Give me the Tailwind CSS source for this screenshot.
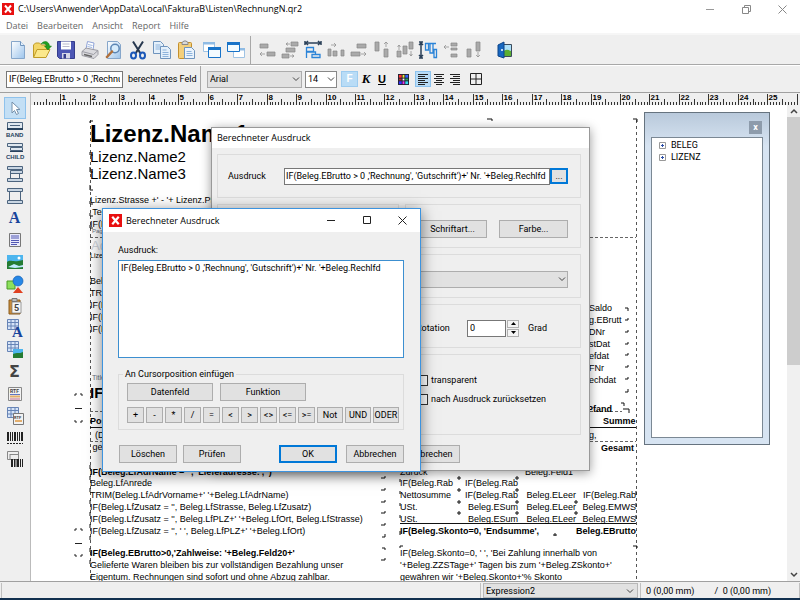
<!DOCTYPE html>
<html lang="de">

<head>
  <meta charset="UTF-8" />
  <meta name="viewport" content="width=device-width, initial-scale=1.0" />
  <title>RechnungN.qr2</title>
  <script src="https://cdn.jsdelivr.net/npm/@tailwindcss/browser@4"></script>
</head>

<body class="h-screen flex flex-col overflow-hidden bg-white text-black text-[9px] leading-3 font-['Roboto','Liberation_Sans',sans-serif]">

  <!-- Titelleiste -->
  <header class="shrink-0 flex items-center h-[18px] pl-0.5 pr-3 font-['Open_Sans',sans-serif]">
    <svg class="w-3 h-3 mr-1" viewBox="0 0 12 12"><rect width="12" height="12" fill="#e81010" /><path d="M3 2.5l6 7M9 2.5l-6 7" stroke="#fff" stroke-width="2" /></svg>
    <h1 class="flex-1">C:\Users\Anwender\AppData\Local\FakturaB\Listen\RechnungN.qr2</h1>
    <div class="flex items-center gap-[25px]">
      <button aria-label="Minimieren"><svg class="w-[11px] h-[11px]" viewBox="0 0 11 11"><path d="M1 5.5h8" stroke="#999" /></svg></button>
      <button aria-label="Wiederherstellen"><svg class="w-[11px] h-[11px]" viewBox="0 0 11 11" fill="none" stroke="#888"><path d="M1.5 3.5h6v6h-6zM3.500 3.500v-2h6v6h-2" /></svg></button>
      <button aria-label="Schließen"><svg class="w-[11px] h-[11px]" viewBox="0 0 11 11"><path d="M1.500 1.500l8 8M9.500 1.500l-8 8" stroke="#888" /></svg></button>
    </div>
  </header>

  <!-- Menü -->
  <nav class="shrink-0 flex items-start gap-[9px] h-[15px] pl-1.5 font-['Open_Sans',sans-serif] leading-4 text-[#666]">
    <a href="#">Datei</a>
    <a href="#">Bearbeiten</a>
    <a href="#">Ansicht</a>
    <a href="#">Report</a>
    <a href="#">Hilfe</a>
  </nav>

  <!-- Symbolleiste -->
  <div class="shrink-0 flex items-center h-8 pl-1.5 bg-[#efefef] border-t-2 border-t-[#f6f6f6] border-b border-b-[#a8a8a8] [&_svg]:w-5 [&_svg]:h-5 [&_button]:h-6 [&_button]:flex [&_button]:items-center [&_button]:justify-center">
    <div class="flex [&_button]:w-6">
      <button aria-label="Neu"><svg viewBox="0 0 20 20"><defs><linearGradient id="pg" x2="1" y2="1"><stop offset="0" stop-color="#fff" /><stop offset="1" stop-color="#9cc4ec" /></linearGradient></defs><path d="M3.500 1.500h9l4 4v13h-13z" fill="url(#pg)" stroke="#86a6ca" /><path d="M12.500 1.500v4h4" fill="#e4f0fb" stroke="#6f94bd" /></svg></button>
      <button aria-label="Öffnen"><svg viewBox="0 0 20 20"><path d="M1.500 17V5l2-2h4l2 2h5v4" fill="#f3d668" stroke="#c09c28" /><path d="M1.500 17.500l3.500-8h13l-4 8z" fill="#fbe88c" stroke="#c09c28" /><path d="M9 4c3-4 8-3 8.500 2h2l-3.500 4-3.500-4h2c0-2-3-3-5.500-2z" fill="#22a022" stroke="#137013" stroke-width=".5" /></svg></button>
      <button aria-label="Speichern"><svg viewBox="0 0 20 20"><path d="M1.500 1.500h17v17H3.500l-2-2z" fill="#4c56b4" stroke="#343c8c" /><path d="M5 1.500h10v8H5z" fill="#fff" /><path d="M6.500 4h7M6.500 6.500h7" stroke="#b9b9cc" /><path d="M6 13h8v5.500H6z" fill="#d5d7e8" /><path d="M7.500 14h2.500v4.500H7.500z" fill="#343c8c" /></svg></button>
      <button aria-label="Drucken"><svg viewBox="0 0 20 20"><path d="M6 9l1.500-7.500 6.500 1.500-1 7z" fill="#fff" stroke="#8fa3d8" /><path d="M2 11.500l4-3.500 12 2.500v4l-4 4-12-3z" fill="#dadade" stroke="#9a9aa2" /><path d="M2 11.500l11.500 3 4.500-4" fill="none" stroke="#9a9aa2" /><path d="M4 14.500l8 2" stroke="#666" stroke-width="1.500" /><path d="M8 4.500l4.500 1M7.500 6.500l4.500 1" stroke="#9fb7e0" /></svg></button>
      <button aria-label="Vorschau"><svg viewBox="0 0 20 20"><path d="M3.500 1.500h10l3 3v14h-13z" fill="url(#pg)" stroke="#86a6ca" /><circle cx="11" cy="8.500" r="4.200" fill="#d7ecfc" stroke="#5c86b4" stroke-width="1.500" /><path d="M8 11.500l-5 5.500" stroke="#b0703c" stroke-width="2.500" stroke-linecap="round" /></svg></button>
      <button aria-label="Ausschneiden"><svg viewBox="0 0 20 20" fill="none"><path d="M5 1.500l7.500 12M15 1.500L7.500 13.500" stroke="#27384f" stroke-width="2" /><ellipse cx="5.500" cy="15.500" rx="2.500" ry="3" stroke="#1c58b8" stroke-width="2" /><ellipse cx="14.500" cy="15.500" rx="2.500" ry="3" stroke="#1c58b8" stroke-width="2" /></svg></button>
      <button aria-label="Kopieren"><svg viewBox="0 0 20 20"><path d="M1.500 1.500h7l3 3v9h-10z" fill="#e4f0fb" stroke="#6f94bd" /><path d="M3.500 5h5M3.500 7h5M3.500 9h5" stroke="#8db3dc" /><path d="M8.500 6.500h7l3 3v9h-10z" fill="#e4f0fb" stroke="#6f94bd" /><path d="M10.500 10h4M10.500 12.500h6M10.500 14.500h6M10.500 16.500h6" stroke="#8db3dc" /></svg></button>
      <button aria-label="Einfügen"><svg viewBox="0 0 20 20"><rect x="2.500" y="2.500" width="13" height="16" rx="1" fill="#f3cf7b" stroke="#c48f2c" /><path d="M6 4.500v-2l2-1.500h2l2 1.500v2z" fill="#d9d9d9" stroke="#888" /><path d="M8.500 7.500h7l3 3v8h-10z" fill="#eaf3fc" stroke="#6f94bd" /><path d="M10.500 11.500h5M10.500 13.500h6M10.500 15.500h6" stroke="#8db3dc" /></svg></button>
    </div>
    <div class="flex ml-0.5 [&_button]:w-6">
      <button aria-label="Nach vorne"><svg viewBox="0 0 20 20"><path d="M1.500 2.500h11v9h-11z" fill="#fff" stroke="#9fc3e4" /><path d="M1 2h12v2.500H1z" fill="#8fbbe4" /><path d="M6.500 7.500h12v10h-12z" fill="#f3fbff" stroke="#1873c8" /><path d="M6 7h13v3H6z" fill="#1873c8" /></svg></button>
      <button aria-label="Nach hinten"><svg viewBox="0 0 20 20"><path d="M7.500 8.500h11v9h-11z" fill="#fff" stroke="#9fc3e4" /><path d="M7 8h12v2.500H7z" fill="#8fbbe4" /><path d="M1.500 2.500h12v9h-12z" fill="#f3fbff" stroke="#1873c8" /><path d="M1 2h13v3H1z" fill="#1873c8" /></svg></button>
    </div>
    <div class="w-px h-7 ml-0.5 mr-1 bg-[#a8a8a8]"></div>
    <div class="flex [&_button]:w-[23px]">
      <button aria-label="Links ausrichten"><svg viewBox="0 0 20 20" stroke-width=".7"><path d="M3 4h8v4H3zM10 12h8v4h-8z" fill="#aaa" stroke="#888" /><path d="M8 14H3M5 12l-2 2 2 2" fill="none" stroke="#888" /></svg></button>
      <button aria-label="Horizontal zentrieren"><svg viewBox="0 0 20 20" stroke-width=".7"><path d="M11 2h7v4h-7zM6 8h9v4H6zM2 14h7v4H2z" fill="#aaa" stroke="#888" /><path d="M10 4H6M8 2.500L6 4l2 1.500M10 16h4M12 14.500l2 1.500-2 1.500" fill="none" stroke="#888" /></svg></button>
      <button aria-label="Gleiche Breite"><svg viewBox="0 0 20 20" fill="none"><path d="M2 3h16" stroke="#2b4058" stroke-width="1.500" /><path d="M2 1v4M18 1v4M5 1L3 3l2 2M15 1l2 2-2 2" stroke="#2b4058" stroke-width="1.500" /><path d="M3.500 7v11M3.500 7.500h7v4h-7M3.500 12h9v3M9 14.500h8v3H9z" stroke="#2b84d8" stroke-width="1.300" /></svg></button>
      <button aria-label="Oben ausrichten"><svg viewBox="0 0 20 20" stroke-width=".7"><path d="M2 9h3v7H2zM7 11h4v5H7zM15 10h3v6h-3z" fill="#aaa" stroke="#888" /><path d="M5 5h5M8 3l2 2-2 2" fill="none" stroke="#888" /></svg></button>
      <button aria-label="Rechts ausrichten"><svg viewBox="0 0 20 20" stroke-width=".7"><path d="M8 4h9v4H8zM2 12h9v4H2z" fill="#aaa" stroke="#888" /><path d="M12 14h5M15 12l2 2-2 2" fill="none" stroke="#888" /></svg></button>
      <button aria-label="Oberkante"><svg viewBox="0 0 20 20" stroke-width=".7"><path d="M3 2h4v9H3zM12 9h4v8h-4z" fill="#aaa" stroke="#888" /><path d="M14 7V2M12 4l2-2 2 2" fill="none" stroke="#888" /></svg></button>
      <button aria-label="Vertikal zentrieren"><svg viewBox="0 0 20 20" stroke-width=".7"><path d="M2 11h4v6H2zM8 6h4v8H8zM14 2h4v7h-4z" fill="#aaa" stroke="#888" /><path d="M4 10V5M2.500 7L4 5l1.500 2M16 11v5M14.500 14l1.500 2 1.500-2" fill="none" stroke="#888" /></svg></button>
      <button aria-label="Gleiche Höhe"><svg viewBox="0 0 20 20" fill="none"><path d="M3 2v16M1 2h4M1 18h4M1 5l2-2 2 2M1 15l2 2 2-2" stroke="#2b4058" stroke-width="1.500" /><path d="M7 3.500h11M7.500 3v7h3V3M12 4v9h3V4M16 9.500h2.500v8H16z" stroke="#2b84d8" stroke-width="1.300" /></svg></button>
      <button aria-label="Abstand verkleinern"><svg viewBox="0 0 20 20" stroke-width=".7"><path d="M10 3h6v3h-6zM10 8h6v2h-6zM10 14h6v3h-6z" fill="#aaa" stroke="#888" /><path d="M8 7H3M5 5L3 7l2 2" fill="none" stroke="#888" /></svg></button>
      <button aria-label="Unterkante"><svg viewBox="0 0 20 20" stroke-width=".7"><path d="M3 9h4v8H3zM12 2h4v9h-4z" fill="#aaa" stroke="#888" /><path d="M14 12v5M12 15l2 2 2-2" fill="none" stroke="#888" /></svg></button>
    </div>
    <button aria-label="Beenden" class="w-6 ml-2"><svg viewBox="0 0 20 20"><path d="M8.500 4.500h8v12h-8z" fill="#ace0fa" stroke="#3b4b5c" /><path d="M9 11c3-2 5-1 7 0v5H9z" fill="#5cae31" /><path d="M3 5l6-3v16l-6-2z" fill="#1767c0" stroke="#0d4488" /><circle cx="7" cy="10" r="1" fill="#fff" /></svg></button>
  </div>

  <!-- Formatleiste -->
  <div class="shrink-0 flex items-center h-[28px] pl-1.5 bg-[#efefef] border-t border-t-white border-b border-b-[#a0a0a0]">
    <input id="ausdruck" type="text" value="IF(Beleg.EBrutto &gt; 0 ,'Rechnung', 'Gutschrift')" class="w-[117px] h-[17px] px-0.5 bg-white border border-[#777] outline-none" />
    <label for="ausdruck" class="w-[73px] pl-[5px] whitespace-nowrap">berechnetes Feld</label>
    <div class="w-px h-[27px] ml-1 mr-1.5 bg-[#a8a8a8]"></div>
    <div class="relative">
      <select aria-label="Schriftart" class="appearance-none block w-[95px] h-[17px] pl-0.5 bg-[#e1e1e1] border border-[#acacac]"><option>Arial</option></select>
      <svg class="absolute right-0.5 top-1 w-2 h-2 pointer-events-none" viewBox="0 0 8 8" fill="none" stroke="#444"><path d="M1 2.500l3 3 3-3" /></svg>
    </div>
    <div class="relative ml-[3px]">
      <select aria-label="Schriftgröße" class="appearance-none block w-8 h-[17px] pl-0.5 bg-white border border-[#888]"><option>14</option></select>
      <svg class="absolute right-0.5 top-1 w-2 h-2 pointer-events-none" viewBox="0 0 8 8" fill="none" stroke="#444"><path d="M1 2.500l3 3 3-3" /></svg>
    </div>
    <button class="w-[17px] h-4 ml-1 bg-[#b9dcf6] border border-[#9ccbef] text-white font-bold text-[10px] font-['Liberation_Sans']">F</button>
    <button class="w-4 h-4 font-bold italic text-[13px] font-['Liberation_Serif']">K</button>
    <button class="w-4 h-4 font-bold underline text-[11px] font-['Liberation_Sans']">U</button>
    <button aria-label="Farbe" class="ml-2"><svg class="w-[11px] h-[11px]" viewBox="0 0 12 12"><rect width="12" height="12" fill="#223" /><path d="M1 1h3v3H1z" fill="#f33" /><path d="M5 1h2v3H5z" fill="#ee3" /><path d="M8 1h3v3H8z" fill="#36f" /><path d="M1 5h3v2H1z" fill="#a33" /><path d="M5 5h2v2H5z" fill="#fff" /><path d="M8 5h3v2H8z" fill="#2a6" /><path d="M1 8h3v3H1z" fill="#33f" /><path d="M5 8h2v3H5z" fill="#e3e" /><path d="M8 8h3v3H8z" fill="#3de" /></svg></button>
    <button aria-label="Linksbündig" class="w-4 h-4 ml-1.5 flex items-center justify-center bg-[#b9dcf6] border border-[#8dc3ee]"><svg class="w-[11px] h-[11px] shrink-0" viewBox="0 0 11 11" stroke="#222"><path d="M0 .5h10M0 2.500h7M0 4.500h10M0 6.500h7M0 8.500h10M0 10.500h7" /></svg></button>
    <button aria-label="Zentriert" class="w-4 h-4 flex items-center justify-center"><svg class="w-[11px] h-[11px]" viewBox="0 0 11 11" stroke="#222"><path d="M0 .5h10M2 2.500h6M0 4.500h10M2 6.500h6M0 8.500h10M2 10.500h6" /></svg></button>
    <button aria-label="Rechtsbündig" class="w-4 h-4 flex items-center justify-center"><svg class="w-[11px] h-[11px]" viewBox="0 0 11 11" stroke="#222"><path d="M0 .5h10M3 2.500h7M0 4.500h10M3 6.500h7M0 8.500h10M3 10.500h7" /></svg></button>
    <button aria-label="Rahmen" class="ml-[7px]"><svg class="w-3 h-3" viewBox="0 0 12 12" fill="none" stroke="#222"><path d="M.5 .5h11v11H.5zM6 1v10M1 6h10" /></svg></button>
  </div>

  <main class="flex-1 min-h-0 flex">
    <!-- Werkzeuge -->
    <aside class="w-[31px] shrink-0 flex flex-col items-center pt-1 pr-px bg-[#efefef] border-r border-[#bbb] [&_button]:w-[22px] [&_button]:h-[22px] [&_button]:shrink-0 [&_button]:flex [&_button]:items-center [&_button]:justify-center [&_svg]:w-[18px] [&_svg]:h-[18px] [&_svg]:shrink-0 [&_svg]:overflow-visible">
      <button aria-label="Auswahl" class="bg-[#c3dff5] border border-[#8fc2ec]"><svg viewBox="0 0 18 18"><path d="M6 3v11l2.500-2.500 2 4 2-1-2-4H14z" fill="#fff" stroke="#7590aa" /></svg></button>
      <button aria-label="Band"><svg viewBox="0 0 18 18"><path d="M1.500 1.500h15v6h-15z" fill="#dfe8f0" stroke="#4c647e" /><path d="M4 4.500h10" stroke="#4c647e" /><path d="M1 8h16" stroke="#27425e" stroke-width="2" /><text x="0" y="16" font-size="6" font-weight="bold" font-family="Liberation Sans" fill="#27425e">BAND</text></svg></button>
      <button aria-label="Child"><svg viewBox="0 0 18 18"><path d="M1.500 .5h15v3h-15zM4.500 4.500h12v3h-12z" fill="#dfe8f0" stroke="#4c647e" /><path d="M4 8.500h13" stroke="#27425e" /><text x="0" y="16" font-size="6" font-weight="bold" font-family="Liberation Sans" fill="#27425e">CHILD</text></svg></button>
      <button aria-label="Unterdetail"><svg viewBox="0 0 18 18"><path d="M1.500 1.500h15v3h-15zM4.500 5.500h12v3h-12zM1.500 13.500h15v3h-15z" fill="#c9d6e3" stroke="#4c647e" /><path d="M4.500 8v5M13.500 8v5" stroke="#4c647e" /></svg></button>
      <button aria-label="Gruppe"><svg viewBox="0 0 18 18"><path d="M1.500 1.500h15v3h-15zM1.500 13.500h15v3h-15z" fill="#c9d6e3" stroke="#4c647e" /><path d="M3.500 5v8M14.500 5v8" stroke="#4c647e" /></svg></button>
      <button class="font-['Liberation_Serif'] font-bold text-[16px] text-[#17449c]">A</button>
      <button aria-label="Memo"><svg viewBox="0 0 18 18"><path d="M3.500 2.500h11v13h-11z" fill="#e9e9fb" stroke="#777" /><path d="M5 5h8M5 7h8M5 9.500h8M5 11.500h8M5 13.500h6" stroke="#5157b3" /></svg></button>
      <button aria-label="Bild"><svg viewBox="0 0 18 18"><path d="M1 2h16v14H1z" fill="#4db5ee" /><path d="M1 9c4-3 5 1 16-2v9H1z" fill="#257c33" /><path d="M2 14l6-3 5 2 4-1v2l-8 1z" fill="#bfeaff" /><circle cx="13" cy="5" r="1.500" fill="#fff" /></svg></button>
      <button aria-label="Form"><svg viewBox="0 0 18 18"><path d="M7 18l5-6 5 6z" fill="#e04020" /><path d="M1 6h8v8H1z" fill="#8de05c" stroke="#4b9a25" /><circle cx="12" cy="6" r="5" fill="#2787e6" stroke="#1761b3" stroke-width=".7" /></svg></button>
      <button aria-label="Systemdaten"><svg viewBox="0 0 18 18"><path d="M3 3h11v14H3z" fill="#c98c3c" stroke="#8c5c1c" /><path d="M6 1.500h5v3H6z" fill="#bbb" stroke="#777" /><path d="M6 5h9v11H6z" fill="#f6f6f6" stroke="#777" stroke-width=".7" /><text x="8" y="14" font-size="9" font-weight="bold" fill="#444">5</text></svg></button>
      <button aria-label="Datenfeld"><svg viewBox="0 0 18 18"><path d="M1.500 .5h11v10h-11zM1.500 3.500h11M1.500 7h11M5 .5v10M9 .5v10" fill="#d6e4f8" stroke="#6784b6" /><text x="6" y="18" font-size="15" font-weight="bold" font-family="Liberation Serif" fill="#17449c">A</text></svg></button>
      <button aria-label="Datenbild"><svg viewBox="0 0 18 18"><path d="M1.500 .5h11v10h-11zM1.500 3.500h11M1.500 7h11M5 .5v10M9 .5v10" fill="#d6e4f8" stroke="#6784b6" /><path d="M7 8h10v9H7z" fill="#4db5ee" /><path d="M7 13c4-2 6 0 10-2v6H7z" fill="#257c33" /></svg></button>
      <button class="font-['DejaVu_Sans'] font-bold text-[16px] text-[#444]">Σ</button>
      <button aria-label="RTF"><svg viewBox="0 0 18 18"><path d="M2.500 2.500h13v13h-13z" fill="#f2f2f2" stroke="#888" /><text x="4" y="8" font-size="5" font-weight="bold" fill="#444">RTF</text><path d="M4 9.500h10" stroke="#5f76c2" /><path d="M4 11.500h10" stroke="#e3ae6c" stroke-width="2" /><path d="M4 14h10" stroke="#c46d8c" /></svg></button>
      <button aria-label="RTF-Datenfeld"><svg viewBox="0 0 18 18"><path d="M1.500 .5h11v10h-11zM1.500 3.500h11M1.500 7h11M5 .5v10M9 .5v10" fill="#d6e4f8" stroke="#6784b6" /><path d="M7.500 6.500h10v11h-10z" fill="#f2f2f2" stroke="#777" /><text x="8" y="12" font-size="4" font-weight="bold" fill="#444">RTF</text><path d="M9 14h7" stroke="#e3ae6c" stroke-width="2" /></svg></button>
      <button aria-label="Barcode"><svg viewBox="0 0 18 18" stroke="#222"><path d="M2 3v9M9 3v9M16 3v9" stroke-width="2" /><path d="M4.500 3v9M6.500 3v9M11.500 3v9M13.500 3v9" /><path d="M1 14.500h16" stroke-dasharray="2 1" /></svg></button>
      <button aria-label="Barcode-Datenfeld"><svg viewBox="0 0 18 18" stroke="#222"><path d="M1.500 .5h11v8h-11zM4 3v6M4 3.500h8" fill="none" stroke="#888" /><path d="M6 8v8M12 8v8" stroke-width="2" /><path d="M8.500 8v8M10 8v8M14.500 8v8M16.500 8v8" /></svg></button>
    </aside>

    <div class="flex-1 min-w-0 flex flex-col">
      <svg id="ruler" class="shrink-0 w-full h-3 bg-[#efefef]" font-size="8" font-weight="bold" font-family="Liberation Sans"></svg>

      <div class="flex-1 min-h-0 flex">
        <!-- Berichtsseite -->
        <section class="relative flex-1 min-w-0 overflow-hidden font-['Liberation_Sans',sans-serif] leading-3 whitespace-pre [&>div]:absolute">
          <svg class="absolute inset-0 w-full h-full" fill="none" stroke="#333">
            <path d="M59.500 15v460M605.500 15v460" stroke="#555" stroke-dasharray="3 3" />
            <path d="M59 132.500h546M59 306.500h532M59 336.500h546" stroke="#666" stroke-dasharray="3 2" />
            <path d="M59 322.500h546M369 418.500h236" stroke="#111" />
            <!-- Eckmarken der Felder -->
            <path stroke="#111" d="M59 18v-2h3M59 47v3h3M59 62v5h3M59 80v5h3M59 96v3h3M59 108v3h3M59 120v3h3M59 360v4M59 371v4M59 383v4M59 395v4M59 407v4M59 419v4M59 431v4M59 443v4M59 455v4M350 373h4v-2M350 385h4v-2M350 397h4v-2M350 408h4v-2M350 420h4v-2M351 432h3v-3M351 443h3v2M350 455h4v-2M456 14h5v2M602 14h4v3M594 203h3v3M594 215h3v-2M594 227h3v-2M594 239h3v-2M594 250h3v-2M594 262h3v-2M594 274h3v-2M594 287h3v-3M590 298h3v3M592 304h6v4" />
            <path stroke="#111" d="M369 374v3M369 386v3M369 398v3M369 410v3M426 373h4m-2-2v4M484 373h4m-2-2v4M426 385h4m-2-2v4M484 385h4m-2-2v4M426 397h4m-2-2v4M484 397h4m-2-2v4M543 397h4m-2-2v4M426 408h4m-2-2v4M484 408h4m-2-2v4M543 408h4m-2-2v4M605 386v4M605 398v4M605 410v4M522 430h4m-2-2v3M369 443v-2h3M602 441h4v2M369 430v-4" />
            <path stroke="#222" d="M44 291v-2h2M49 289h2v2M44 303.500h7M44 315v2h2M49 317h2v-2M44 426v-2h2M49 424h2v2M44 438.500h7M44 449v2h2M49 451h2v-2" />
          </svg>

          <div class="left-[59px] top-[15px] text-[24px] leading-7 font-bold">Lizenz.Name1</div>
          <div class="left-[59px] top-[43px] text-[15px] leading-[17px]">Lizenz.Name2
Lizenz.Name3</div>
          <div class="left-[59px] top-[89px]">Lizenz.Strasse +' - '+ Lizenz.PLZ
 Telefon
IF(Lizenz</div>
          <div class="left-[61px] top-[121px] text-[6px] leading-[10px] text-gray-500">Pagehead</div>
          <div class="left-[60px] top-[135px] text-[13px] text-gray-300">Adresse</div>
          <div class="left-[59px] top-[145px] text-[7px]">Lizenz.Name</div>
          <div class="left-[59px] top-[170px]">Beleg.Anrede
TRIM(Beleg
IF(Beleg
IF(Beleg
IF(Beleg</div>
          <div class="left-[61px] top-[267px] text-[7px] text-gray-500">Title</div>
          <div class="left-[59px] top-[282px] text-[15px] font-bold">IF(Beleg</div>
          <div class="left-[59px] top-[310px] font-bold">Pos</div>
          <div class="left-[59px] top-[324px]">  (Datum
 gesamt</div>

          <div class="left-[59px] top-[361px] font-bold">IF(Beleg.LfAdrName = '', 'Lieferadresse:','')</div>
          <div class="left-[59px] top-[372px]">Beleg.LfAnrede
TRIM(Beleg.LfAdrVorname+' '+Beleg.LfAdrName)
IF(Beleg.LfZusatz = '', Beleg.LfStrasse, Beleg.LfZusatz)
IF(Beleg.LfZusatz = '', Beleg.LfPLZ+' '+Beleg.LfOrt, Beleg.LfStrasse)
IF(Beleg.LfZusatz = '', ' ', Beleg.LfPLZ+' '+Beleg.LfOrt)</div>
          <div class="left-[59px] top-[442px]"><b>IF(Beleg.EBrutto&gt;0,'Zahlweise: '+Beleg.Feld20+'</b>
Gelieferte Waren bleiben bis zur vollständigen Bezahlung unser
Eigentum. Rechnungen sind sofort und ohne Abzug zahlbar.</div>

          <div class="left-[558px] top-[197px]">Saldo
g.EBrutt
DNr
stDat
efdat
FNr
echdat</div>
          <div class="left-[556px] top-[298px] font-bold">Pfand</div>
          <div class="left-[572px] top-[310px] font-bold">Summe</div>
          <div class="left-[558px] top-[324px]">g,</div>
          <div class="left-[570px] top-[337px] font-bold">Gesamt</div>

          <div class="left-[369px] top-[361px]">Zurück</div>
          <div class="left-[494px] top-[361px]">Beleg.Feld1</div>
          <div class="left-[369px] top-[372px]">IF(Beleg.Rab
Nettosumme
USt.
USt.</div>
          <div class="left-[430px] top-[372px] w-[57px] text-right">IF(Beleg.Rab
IF(Beleg.Rab
Beleg.ESum
Beleg.ESum</div>
          <div class="left-[490px] top-[384px] w-[55px] text-right">Beleg.ELeer
Beleg.ELeer
Beleg.ELeer</div>
          <div class="left-[547px] top-[384px] w-[58px] text-right">IF(Beleg.Rab
Beleg.EMWS
Beleg.EMWS</div>
          <div class="left-[369px] top-[420px] w-[236px] flex justify-between font-bold"><span>IF(Beleg.Skonto=0, 'Endsumme',</span><span>Beleg.EBrutto</span></div>
          <div class="left-[369px] top-[442px]">IF(Beleg.Skonto=0, ' ', 'Bei Zahlung innerhalb von
'+Beleg.ZZSTage+' Tagen bis zum '+Beleg.ZSkonto+'
gewähren wir '+Beleg.Skonto+'% Skonto</div>
        </section>

        <!-- Bildlaufleiste -->
        <div class="w-[13px] shrink-0 flex flex-col items-center bg-[#f0f0f0]">
          <svg class="w-3 h-3" viewBox="0 0 12 12" fill="none" stroke="#444" stroke-width="1.500"><path d="M3 8l3-3 3 3" /></svg>
          <div class="w-full h-[52%] bg-[#cdcdcd]"></div>
          <svg class="w-3 h-3 mt-auto" viewBox="0 0 12 12" fill="none" stroke="#444" stroke-width="1.500"><path d="M3 4l3 3 3-3" /></svg>
        </div>
      </div>
    </div>
  </main>

  <!-- Statusleiste -->
  <footer class="shrink-0 flex h-[19px] pt-px pl-px gap-0.5 bg-[#efefef] border-t border-[#a0a0a0] border-b-2 border-b-[#12304f]">
    <div class="flex-1 border-l border-r border-[#c0c0c0]"></div>
    <div class="relative w-[155px]">
      <select aria-label="Element" class="appearance-none block w-full h-full pl-0.5 bg-[#e1e1e1] border border-[#b8b8b8]"><option>Expression2</option></select>
      <svg class="absolute right-1 top-1 w-2 h-2 pointer-events-none" viewBox="0 0 8 8" fill="none" stroke="#444"><path d="M1 2.500l3 3 3-3" /></svg>
    </div>
    <div class="w-[160px] flex items-center gap-5 pl-[5px] border-l border-r border-[#c0c0c0]"><span>0 (0,00 mm)</span><span>/&nbsp; 0 (0,00 mm)</span></div>
  </footer>

  <!-- Feldpalette -->
  <div class="absolute left-[644px] top-[112px] w-[126px] h-[333px] flex flex-col p-1.5 pt-0 bg-linear-to-b from-[#b9c9db] to-[#d7e4f2] to-10% border border-[#66737f]">
    <div class="shrink-0 h-6 flex items-center justify-end pt-1">
      <button class="w-[13px] h-[13px] mr-px bg-[#8d9bab] text-white font-bold leading-[11px]">x</button>
    </div>
    <ul class="flex-1 pl-1.5 pt-px bg-white border border-[#7b8894] leading-3">
      <li class="flex items-center gap-1"><svg class="w-[9px] h-[9px]" viewBox="0 0 9 9" fill="none"><path d="M1.500 1.500h6v6h-6z" stroke="#999" /><path d="M3 4.500h3M4.500 3v3" stroke="#2c4fa8" /></svg>BELEG</li>
      <li class="flex items-center gap-1"><svg class="w-[9px] h-[9px]" viewBox="0 0 9 9" fill="none"><path d="M1.500 1.500h6v6h-6z" stroke="#999" /><path d="M3 4.500h3M4.500 3v3" stroke="#2c4fa8" /></svg>LIZENZ</li>
    </ul>
  </div>

  <!-- Eigenschaften -->
  <div class="absolute left-[211px] top-[127px] w-[379px] bg-[#efefef] border border-[#999] shadow-[0_2px_10px_rgba(0,0,0,0.4)]">
    <h2 class="h-5 pl-[5px] bg-white font-['Open_Sans',sans-serif] leading-5">Berechneter Ausdruck</h2>
    <div class="flex flex-col gap-1.5 pt-1.5 pl-[5px] pr-2 pb-[7px] [&_section]:border [&_section]:border-[#dcdcdc] [&_section]:pr-3">
      <section class="flex items-center h-11 pl-2.5">
        <label for="ausdruck2" class="w-14">Ausdruck</label>
        <input id="ausdruck2" type="text" value="IF(Beleg.EBrutto &gt; 0 ,'Rechnung', 'Gutschrift')+' Nr. '+Beleg.Rechlfd" class="flex-1 min-w-0 h-[17px] px-px bg-white border border-[#777] outline-none" />
        <button class="w-[18px] h-4 bg-[#e1e1e1] border-2 border-[#0078d7] leading-3">...</button>
      </section>
      <div class="flex gap-1.5">
        <section class="flex-1 h-11"></section>
        <section class="w-[176px] h-11 pt-1.5 flex items-center justify-end gap-3">
          <button class="w-[69px] h-[18px] bg-[#e1e1e1] border border-[#adadad]">Schriftart...</button>
          <button class="w-[69px] h-[18px] bg-[#e1e1e1] border border-[#adadad]">Farbe...</button>
        </section>
      </div>
      <section class="h-11 pt-1.5 pl-3 flex items-center">
        <div class="relative flex-1">
          <select aria-label="Band" class="appearance-none block w-full h-[17px] bg-[#e1e1e1] border border-[#adadad]"></select>
          <svg class="absolute right-0.5 top-1 w-2 h-2 pointer-events-none" viewBox="0 0 8 8" fill="none" stroke="#444"><path d="M1 2.500l3 3 3-3" /></svg>
        </div>
      </section>
      <section class="h-11 pt-1 flex items-center justify-end">
        <label for="rotation" class="w-[51px]">Rotation</label>
        <input id="rotation" type="text" value="0" class="w-[39px] h-[17px] px-0.5 bg-white border border-[#777] outline-none" />
        <div class="w-3 ml-px flex flex-col gap-px">
          <button aria-label="Mehr" class="h-2 flex items-center justify-center bg-[#f4f4f4] border border-[#b0b0b0]"><svg class="w-[5px] h-[3px]" viewBox="0 0 5 3"><path d="M0 3L2.500 0 5 3z" /></svg></button>
          <button aria-label="Weniger" class="h-2 flex items-center justify-center bg-[#f4f4f4] border border-[#b0b0b0]"><svg class="w-[5px] h-[3px]" viewBox="0 0 5 3"><path d="M0 0l2.500 3L5 0z" /></svg></button>
        </div>
        <span class="w-10 ml-[9px]">Grad</span>
      </section>
      <section class="h-[81px] pt-[19px] pl-[199px] flex flex-col gap-[7px]">
        <label class="flex items-center gap-[3px]"><input type="checkbox" class="appearance-none w-[11px] h-[11px] bg-white border border-[#333]" />transparent</label>
        <label class="flex items-center gap-[3px]"><input type="checkbox" class="appearance-none w-[11px] h-[11px] bg-white border border-[#333]" />nach Ausdruck zurücksetzen</label>
      </section>
      <button class="w-[58px] h-[18px] mt-1 ml-[185px] bg-[#e1e1e1] border border-[#adadad]">Abbrechen</button>
    </div>
  </div>

  <!-- Ausdruck bearbeiten -->
  <div class="absolute left-[102px] top-[208px] w-[319px] bg-[#efefef] border border-[#3c93df] shadow-[0_3px_14px_rgba(0,0,0,0.5)]">
    <div class="flex items-center h-[23px] pl-1.5 pr-3 bg-white font-['Open_Sans',sans-serif]">
      <svg class="w-[13px] h-[13px] mr-1" viewBox="0 0 12 12"><rect width="12" height="12" fill="#e81010" /><path d="M3 2.500l6 7M9 2.500l-6 7" stroke="#fff" stroke-width="2" /></svg>
      <h2 class="flex-1">Berechneter Ausdruck</h2>
      <div class="flex gap-[25px]">
        <button aria-label="Minimieren"><svg class="w-[11px] h-[11px]" viewBox="0 0 11 11"><path d="M2 5.500h8" stroke="#222" /></svg></button>
        <button aria-label="Maximieren"><svg class="w-[11px] h-[11px]" viewBox="0 0 11 11"><path d="M2.500 1.500h7v7h-7z" fill="none" stroke="#222" /></svg></button>
        <button aria-label="Schließen"><svg class="w-[11px] h-[11px]" viewBox="0 0 11 11"><path d="M1.500 1.500l8 8M9.500 1.500l-8 8" stroke="#222" /></svg></button>
      </div>
    </div>
    <div class="pt-3 pl-[15px] pr-4 pb-2">
      <label for="editor" class="block h-4">Ausdruck:</label>
      <textarea id="editor" class="block w-full h-[98px] px-0.5 py-px bg-white border border-[#3c8fd0] outline-none resize-none leading-3">IF(Beleg.EBrutto &gt; 0 ,'Rechnung', 'Gutschrift')+' Nr. '+Beleg.Rechlfd</textarea>
      <fieldset class="mt-2.5 pl-2 pb-1.5 border border-[#dcdcdc] [&_button]:bg-[#e1e1e1] [&_button]:border [&_button]:border-[#adadad]">
        <legend class="-ml-1 px-0.5">An Cursorposition einfügen</legend>
        <div class="flex gap-[7px] mt-[3px]">
          <button class="w-[86px] h-[18px]">Datenfeld</button>
          <button class="w-[86px] h-[18px]">Funktion</button>
        </div>
        <div class="flex gap-0.5 mt-1.5 [&_button]:h-4 [&_button]:w-[17px] [&_button]:leading-3">
          <button>+</button><button>-</button><button>*</button><button>/</button><button>=</button><button>&lt;</button><button>&gt;</button><button>&lt;&gt;</button><button>&lt;=</button><button>&gt;=</button>
          <div class="flex gap-0.5 [&_button]:w-[26px]!"><button>Not</button><button>UND</button><button>ODER</button></div>
        </div>
      </fieldset>
      <div class="flex mt-[15px] pl-px [&_button]:w-[58px] [&_button]:h-[18px] [&_button]:bg-[#e1e1e1]">
        <button class="border border-[#adadad]">Löschen</button>
        <button class="ml-1.5 border border-[#adadad]">Prüfen</button>
        <button class="ml-auto mr-[9px] border-2 border-[#0078d7]">OK</button>
        <button class="border border-[#adadad]">Abbrechen</button>
      </div>
    </div>
  </div>

  <script>
    // Lineal in Zentimetern, zehn Teilstriche je Zentimeter
    const ruler = document.getElementById("ruler");
    const cm = 29.45;

    function drawRuler() {
      const width = window.innerWidth - 31;
      let marks = "";
      for (let i = 1; i * cm / 10 < width; i++) {
        const x = Math.round(i * cm / 10) + 0.5;
        const top = i % 10 === 0 ? 1 : i % 5 === 0 ? 6 : 9;
        marks += `<path d="M${x} ${top}V12" stroke="#333"/>`;
        if (i % 10 === 0 && x + 10 < width) marks += `<text x="${x + 1}" y="7">${i / 10}</text>`;
      }
      ruler.innerHTML = marks;
    }

    drawRuler();
    window.addEventListener("resize", drawRuler);
  </script>
</body>

</html>
